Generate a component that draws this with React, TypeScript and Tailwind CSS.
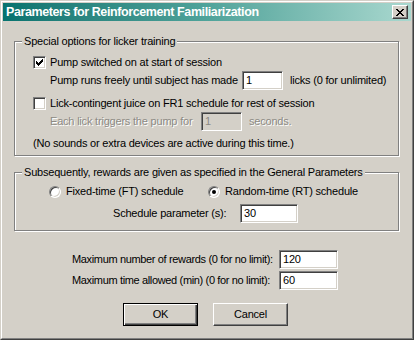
import React from "react";

// Windows classic dialog: Parameters for Reinforcement Familiarization
const FONT = "font-['Liberation_Sans',Arial,sans-serif]";

function PixelGlyph({ rows, w, h }: { rows: string[]; w: number; h: number }) {
  return (
    <svg width={w} height={h} viewBox={`0 0 ${w} ${h}`} shapeRendering="crispEdges">
      {rows.map((row, y) =>
        row.split("").map((c, x) => (c === "x" ? <rect key={`${x}-${y}`} x={x} y={y} width="1" height="1" fill="#000" /> : null))
      )}
    </svg>
  );
}

const CHECK = ["......x", ".....xx", "x...xxx", "xx.xxx.", "xxxxx..", ".xxx...", "..x...."];
const CLOSE = ["xx....xx", ".xx..xx.", "..xxxx..", "...xx...", "..xxxx..", ".xx..xx.", "xx....xx"];

function CheckBox({ checked }: { checked?: boolean }) {
  return (
    <span className="flex h-[13px] w-[13px] shrink-0 items-center justify-center border border-t-[#808080] border-l-[#808080] border-r-white border-b-white bg-white shadow-[inset_1px_1px_0_#404040,inset_-1px_-1px_0_#d4d0c8]">
      {checked && <PixelGlyph rows={CHECK} w={7} h={7} />}
    </span>
  );
}

function Radio({ checked }: { checked?: boolean }) {
  return (
    <span className="flex h-[12px] w-[12px] shrink-0 items-center justify-center rounded-full border border-t-[#808080] border-l-[#808080] border-r-white border-b-white bg-white shadow-[inset_1px_1px_0_#404040,inset_-1px_-1px_0_#d4d0c8]">
      {checked && <span className="h-[4px] w-[4px] rounded-full bg-black" />}
    </span>
  );
}

function Field({ value, width, disabled }: { value: string; width: string; disabled?: boolean }) {
  return (
    <span
      className={`flex h-[19px] ${width} shrink-0 items-center border border-t-[#808080] border-l-[#808080] border-r-white border-b-white pl-[3px] shadow-[inset_1px_1px_0_#404040,inset_-1px_-1px_0_#d4d0c8] ${
        disabled ? "bg-[#d4d0c8] text-[#8c8a84]" : "bg-white text-black"
      }`}
    >
      {value}
    </span>
  );
}

function GroupBox({ title, className, children }: { title: string; className: string; children: React.ReactNode }) {
  return (
    <div className={`relative w-[385px] border border-[#808080] shadow-[inset_1px_1px_0_#fff,1px_1px_0_#fff] ${className}`}>
      <span className="absolute -top-[8px] left-[7px] bg-[#d4d0c8] px-[2px] leading-[14px]">{title}</span>
      {children}
    </div>
  );
}

const disabledText = "text-[#8c8a84] [text-shadow:1px_1px_0_#fff]";

export default function App() {
  return (
    <div className={`${FONT} h-[340px] w-[414px] overflow-hidden whitespace-nowrap border border-t-[#d4d0c8] border-l-[#d4d0c8] border-r-[#404040] border-b-[#404040] bg-[#d4d0c8] text-[11px] leading-[13px] tracking-[-0.2px] text-black`}>
      <div className="h-full w-full border border-t-white border-l-white border-r-[#808080] border-b-[#808080] p-px">
        {/* Title bar */}
        <div className="flex h-[18px] items-center bg-gradient-to-r from-[#05736f] via-[#4fa39a] to-[#a9d8cf] pl-[3px] pr-[3px]">
          <span className="flex-1 text-[12.5px] font-bold tracking-[-0.4px] text-white">
            Parameters for Reinforcement Familiarization
          </span>
          <span className="flex h-[14px] w-[16px] items-center justify-center border border-t-white border-l-white border-r-[#404040] border-b-[#404040] bg-[#d4d0c8] shadow-[inset_-1px_-1px_0_#808080]">
            <PixelGlyph rows={CLOSE} w={8} h={7} />
          </span>
        </div>

        <div className="flex flex-col pl-[11px] pt-[20px]">
          <GroupBox title="Special options for licker training" className="h-[115px] pb-[5px] pl-[18px] pt-[14px]">
            <div className="flex h-[13px] items-center gap-[4px]">
              <CheckBox checked />
              <span>Pump switched on at start of session</span>
            </div>
            <div className="mt-[2px] flex h-[19px] items-center pl-[17px]">
              <span className="w-[192px] shrink-0">Pump runs freely until subject has made</span>
              <Field value="1" width="w-[41px]" />
              <span className="ml-[7px]">licks (0 for unlimited)</span>
            </div>
            <div className="mt-[7px] flex h-[13px] items-center gap-[4px]">
              <CheckBox />
              <span>Lick-contingent juice on FR1 schedule for rest of session</span>
            </div>
            <div className="mt-[2px] flex h-[19px] items-center pl-[17px]">
              <span className={`w-[151px] shrink-0 ${disabledText}`}>Each lick triggers the pump for</span>
              <Field value="1" width="w-[41px]" disabled />
              <span className={`ml-[7px] ${disabledText}`}>seconds.</span>
            </div>
            <div className="mt-[5px] flex h-[14px] items-center">
              (No sounds or extra devices are active during this time.)
            </div>
          </GroupBox>

          <GroupBox
            title="Subsequently, rewards are given as specified in the General Parameters"
            className="mt-[16px] h-[59px] pl-[34px] pt-[12px]"
          >
            <div className="flex h-[13px] items-center">
              <div className="flex w-[159px] items-center gap-[5px]">
                <Radio />
                <span>Fixed-time (FT) schedule</span>
              </div>
              <div className="flex items-center gap-[5px]">
                <Radio checked />
                <span>Random-time (RT) schedule</span>
              </div>
            </div>
            <div className="mt-[6px] flex h-[19px] items-center pl-[64px]">
              <span className="w-[127px] shrink-0">Schedule parameter (s):</span>
              <Field value="30" width="w-[58px]" />
            </div>
          </GroupBox>

          <div className="mt-[19px] flex h-[19px] items-center pl-[58px]">
            <span className="w-[207px] shrink-0 tracking-[-0.35px]">Maximum number of rewards (0 for no limit):</span>
            <Field value="120" width="w-[59px]" />
          </div>
          <div className="mt-[2px] flex h-[19px] items-center pl-[58px]">
            <span className="w-[207px] shrink-0 tracking-[-0.35px]">Maximum time allowed (min) (0 for no limit):</span>
            <Field value="60" width="w-[59px]" />
          </div>

          <div className="mt-[13px] flex gap-[15px] pl-[109px]">
            <button className="h-[23px] w-[75px] border border-black bg-[#d4d0c8] shadow-[inset_1px_1px_0_#fff,inset_-1px_-1px_0_#404040,inset_-2px_-2px_0_#808080]">
              OK
            </button>
            <button className="h-[23px] w-[75px] border border-t-white border-l-white border-r-[#404040] border-b-[#404040] bg-[#d4d0c8] shadow-[inset_-1px_-1px_0_#808080]">
              Cancel
            </button>
          </div>
        </div>
      </div>
    </div>
  );
}
